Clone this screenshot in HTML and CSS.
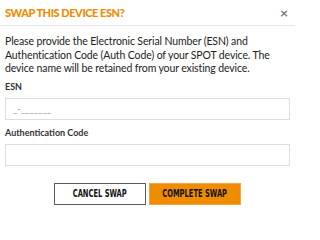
FILE: index.html
```html
<!DOCTYPE html>
<html>
<head>
<meta charset="utf-8">
<link rel="stylesheet" href="styles.css">
</head>
<body>
<div class="modal">
  <div class="modal-header">
    <h2 class="modal-title">SWAP THIS DEVICE ESN?</h2>
    <span class="close">&times;</span>
  </div>
  <div class="modal-body">
    <p class="intro">Please provide the Electronic Serial Number (ESN) and Authentication Code (Auth Code) of your SPOT device. The device name will be retained from your existing device.</p>
    <label class="field-label">ESN</label>
    <div class="input"><span class="placeholder">_-_______</span></div>
    <label class="field-label">Authentication Code</label>
    <div class="input"></div>
    <div class="actions">
      <button class="btn btn-cancel"><span class="btn-text">CANCEL SWAP</span></button>
      <button class="btn btn-complete"><span class="btn-text">COMPLETE SWAP</span></button>
    </div>
  </div>
</div>
</body>
</html>
```
FILE: styles.css
```css
html, body {
  margin: 0;
  padding: 0;
  background: #fff;
}
body {
  font-family: Lato, "Noto Sans", sans-serif;
  color: #222;
  width: 303px;
  height: 220px;
  overflow: hidden;
}
.modal {
  width: 295px;
}
.modal-header {
  display: flex;
  align-items: center;
  justify-content: space-between;
  height: 25px;
  padding: 0 7px 0 5px;
  border-bottom: 1px solid #e6e6e6;
}
.modal-title {
  margin: 0;
  font-size: 11px;
  font-weight: 900;
  color: #f08c00;
  letter-spacing: -0.45px;
}
.close {
  font-size: 14px;
  font-weight: 700;
  color: #777;
  line-height: 1;
}
.modal-body {
  padding: 9px 5px 0 5px;
  display: flex;
  flex-direction: column;
}
.intro {
  margin: 0 0 5px 0;
  font-size: 10.5px;
  line-height: 13.5px;
  color: #222;
  letter-spacing: -0.12px;
}
.field-label {
  font-size: 9px;
  font-weight: 700;
  color: #333;
  line-height: 12px;
  margin-bottom: 5px;
}
.input {
  height: 20px;
  border: 1px solid #dedede;
  margin-bottom: 7px;
  display: flex;
  align-items: center;
  padding-left: 7px;
}
.placeholder {
  font-size: 9.5px;
  color: #999;
}
.actions {
  display: flex;
  justify-content: center;
  gap: 3px;
  margin-top: 10px;
}
.btn {
  width: 92px;
  height: 22px;
  font-family: "DejaVu Sans Condensed", "DejaVu Sans", sans-serif;
  font-stretch: condensed;
  font-weight: 700;
  font-size: 11px;
  color: #111;
  padding: 0;
  display: flex;
  align-items: center;
  justify-content: center;
}
.btn-text {
  display: inline-block;
  transform: scaleX(0.68);
  white-space: nowrap;
}
.btn-cancel {
  background: #fff;
  border: 1px solid #5a5a5a;
}
.btn-complete {
  background: #f08c00;
  border: 1px solid #f5a640;
}
```
